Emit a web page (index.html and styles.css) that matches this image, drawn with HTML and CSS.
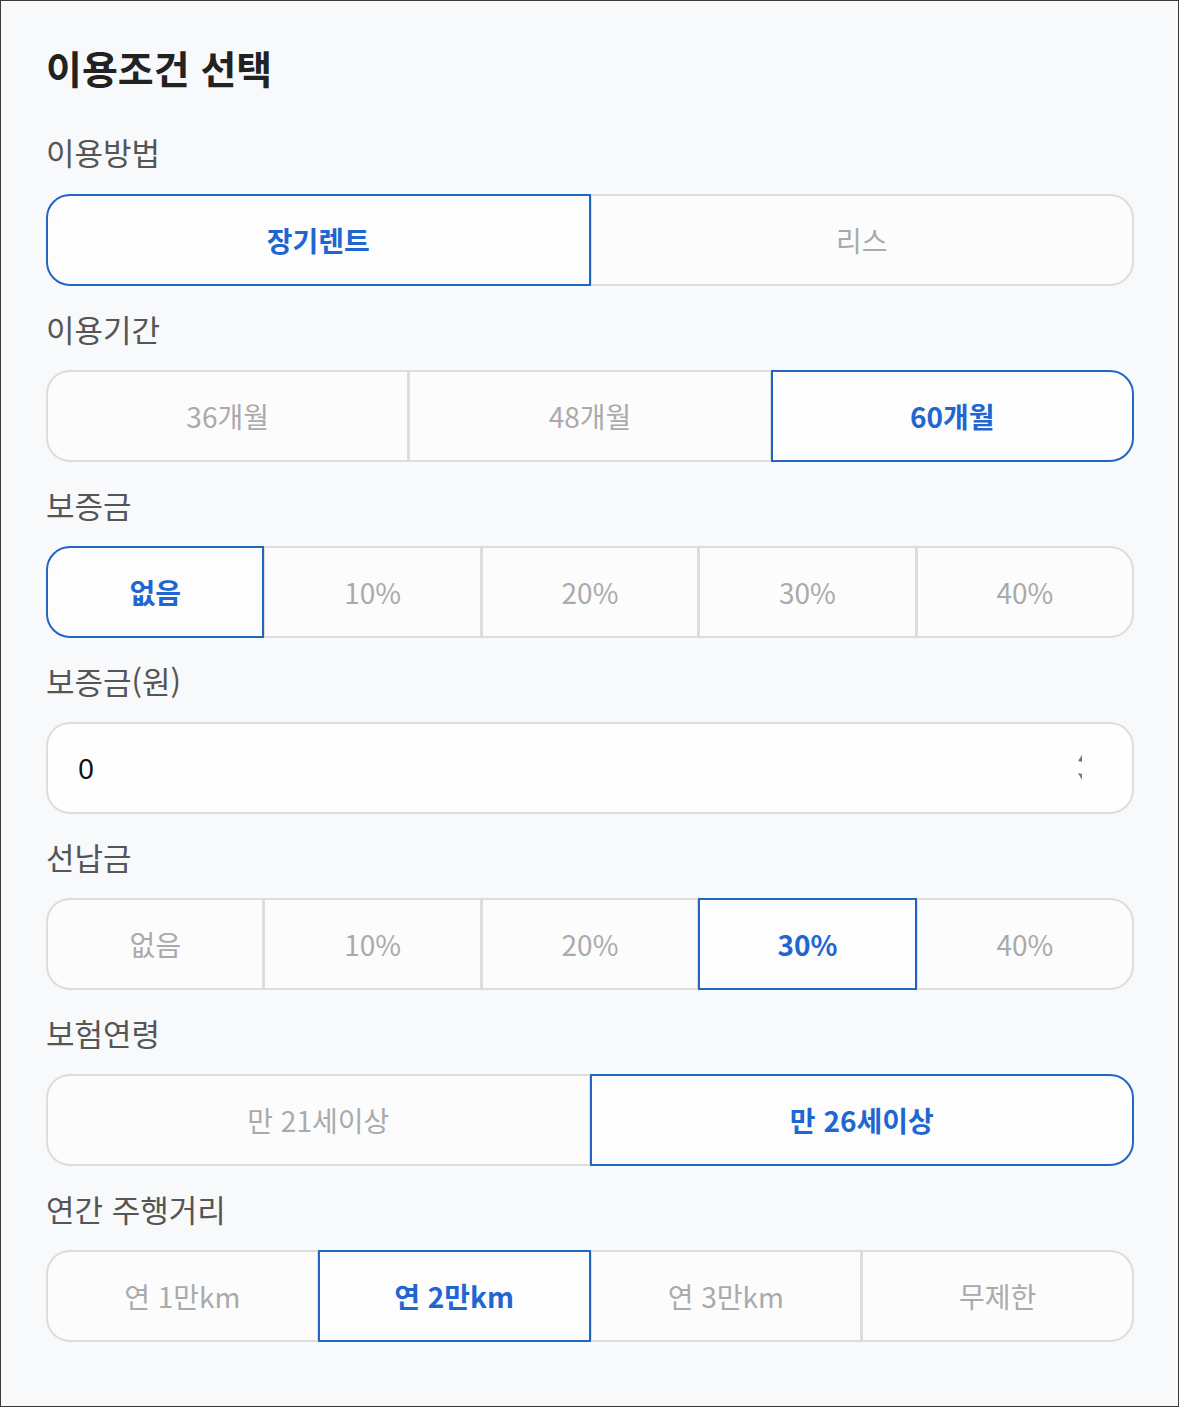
FILE: index.html
```html
<!DOCTYPE html>
<html lang="ko">
<head>
<meta charset="utf-8">
<title>이용조건 선택</title>
<link rel="stylesheet" href="styles.css">
</head>
<body>
<div class="page">
  <h1 class="title">이용조건 선택</h1>

  <div class="label first">이용방법</div>
  <div class="seg">
    <div class="opt on">장기렌트</div>
    <div class="opt">리스</div>
  </div>

  <div class="label">이용기간</div>
  <div class="seg">
    <div class="opt">36개월</div>
    <div class="opt">48개월</div>
    <div class="opt on">60개월</div>
  </div>

  <div class="label">보증금</div>
  <div class="seg">
    <div class="opt on">없음</div>
    <div class="opt">10%</div>
    <div class="opt">20%</div>
    <div class="opt">30%</div>
    <div class="opt">40%</div>
  </div>

  <div class="label">보증금(원)</div>
  <div class="input">
    <span class="value">0</span>
    <svg class="spin" width="8" height="32" viewBox="0 0 8 32">
      <path d="M6 3 L2 9 L6 10 Z" fill="#777"/>
      <path d="M2 21 L6 22 L6 28 Z" fill="#777"/>
    </svg>
  </div>

  <div class="label">선납금</div>
  <div class="seg">
    <div class="opt">없음</div>
    <div class="opt">10%</div>
    <div class="opt">20%</div>
    <div class="opt on">30%</div>
    <div class="opt">40%</div>
  </div>

  <div class="label">보험연령</div>
  <div class="seg">
    <div class="opt">만 21세이상</div>
    <div class="opt on">만 26세이상</div>
  </div>

  <div class="label">연간 주행거리</div>
  <div class="seg">
    <div class="opt">연 1만km</div>
    <div class="opt on">연 2만km</div>
    <div class="opt">연 3만km</div>
    <div class="opt">무제한</div>
  </div>
</div>
</body>
</html>
```
FILE: styles.css
```css
* { box-sizing: border-box; }
html, body { margin: 0; padding: 0; }
body {
  font-family: "Noto Sans CJK KR", "Noto Sans", sans-serif;
  background: #fff;
}
.page {
  width: 1179px;
  height: 1407px;
  border: 1px solid #3a3a3a;
  background: #f8f9fa;
  padding: 42px 45px 0 45px;
}
.title {
  margin: 0;
  font-size: 39px;
  line-height: 48px;
  font-weight: 700;
  color: #222;
  letter-spacing: 0;
}
.label {
  margin: 23px 0 21px;
  font-size: 31px;
  line-height: 40px;
  color: #555;
  font-weight: 400;
}
.label.first { margin-top: 41px; margin-bottom: 22px; }
.seg {
  display: flex;
  width: 1088px;
  height: 92px;
}
.opt {
  flex: 1 1 0;
  display: flex;
  align-items: center;
  justify-content: center;
  border: 2px solid #dddddd;
  background: #fcfcfd;
  color: #aaaaaa;
  font-size: 28px;
  margin-left: -1px;
}
.opt:first-child {
  margin-left: 0;
  border-radius: 24px 0 0 24px;
}
.opt:last-child { border-radius: 0 24px 24px 0; }
.opt.on {
  border-color: #2266c4;
  color: #1f66d1;
  font-weight: 700;
  position: relative;
  z-index: 1;
  background: #fdfdfe;
}
.input {
  width: 1088px;
  height: 92px;
  border: 2px solid #dddddd;
  border-radius: 24px;
  background: #fefefe;
  display: flex;
  align-items: center;
  justify-content: space-between;
  padding: 0 48px 0 30px;
}
.value {
  font-size: 28px;
  color: #111;
  font-family: "Noto Sans", "Noto Sans CJK KR", sans-serif;
}
.spin { display: block; }
```
